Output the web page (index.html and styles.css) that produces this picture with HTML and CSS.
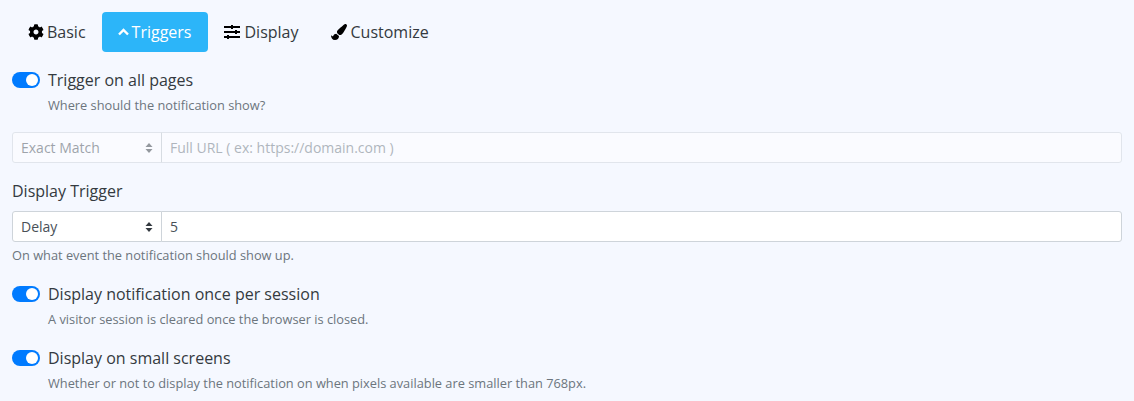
FILE: index.html
```html
<!DOCTYPE html>
<html lang="en">
<head>
    <meta charset="UTF-8">
    <title>Triggers</title>
    <link rel="stylesheet" href="styles.css">
</head>
<body>
    <nav class="tabs">
        <a class="tab" href="#">
            <svg class="tab-icon tab-icon-gear" viewBox="0 0 512 512"><path d="M487.4 315.7l-42.6-24.6c4.3-23.2 4.3-47 0-70.2l42.6-24.6c4.9-2.8 7.1-8.6 5.5-14-11.1-35.6-30-67.8-54.7-94.6-3.8-4.1-10-5.1-14.8-2.3L380.8 110c-17.9-15.4-38.5-27.3-60.8-35.1V25.8c0-5.6-3.9-10.5-9.4-11.7-36.7-8.2-74.3-7.8-109.2 0-5.5 1.2-9.4 6.1-9.4 11.7V75c-22.2 7.9-42.8 19.8-60.8 35.1L88.7 85.5c-4.9-2.8-11-1.9-14.8 2.3-24.7 26.7-43.6 58.9-54.7 94.6-1.7 5.4.6 11.2 5.5 14L67.3 221c-4.3 23.2-4.3 47 0 70.2l-42.6 24.6c-4.9 2.8-7.1 8.6-5.5 14 11.1 35.6 30 67.8 54.7 94.6 3.8 4.1 10 5.1 14.8 2.3l42.6-24.6c17.9 15.4 38.5 27.3 60.8 35.1v49.2c0 5.6 3.9 10.5 9.4 11.7 36.7 8.2 74.3 7.8 109.2 0 5.5-1.2 9.4-6.1 9.4-11.7v-49.2c22.2-7.9 42.8-19.8 60.8-35.1l42.6 24.6c4.9 2.8 11 1.9 14.8-2.3 24.7-26.7 43.6-58.9 54.7-94.6 1.5-5.5-.7-11.3-5.6-14.1zM256 336c-44.1 0-80-35.9-80-80s35.9-80 80-80 80 35.9 80 80-35.9 80-80 80z"/></svg>
            Basic
        </a>
        <a class="tab tab-active" href="#">
            <svg class="tab-chevron" viewBox="0 0 11 8"><path d="M1 6.500 5.500 2 10 6.500" fill="none" stroke="currentColor" stroke-width="2.400"/></svg>
            Triggers
        </a>
        <a class="tab" href="#">
            <svg class="tab-icon tab-icon-wide" viewBox="0 0 16 14"><path d="M0 1h16v2H0zM0 6h16v2H0zM0 11h16v2H0zM7 0h2v4H7zM11 5h2v4h-2zM3 10h2v4H3z"/></svg>
            Display
        </a>
        <a class="tab" href="#">
            <svg class="tab-icon" viewBox="0 0 512 512"><path d="M167.02 309.34c-40.12 2.58-76.53 17.86-97.19 72.3-2.35 6.21-8 9.98-14.59 9.98-11.11 0-45.46-27.67-55.25-34.35C0 439.62 37.93 512 128 512c75.86 0 128-43.77 128-120.19 0-3.11-.65-6.08-.97-9.13l-88.01-73.34zM457.89 0c-15.16 0-29.37 6.71-40.21 16.45C213.27 199.05 192 203.34 192 257.09c0 13.7 3.25 26.76 8.73 38.7l63.82 53.18c7.21 1.8 14.64 3.03 22.39 3.03 62.11 0 98.11-45.47 211.16-256.46 7.38-14.35 13.9-29.85 13.9-45.99C512 20.64 486 0 457.89 0z"/></svg>
            Customize
        </a>
    </nav>

    <div class="switch-row switch-first">
        <span class="switch"><span class="knob"></span></span>
        <div>
            <div class="switch-label">Trigger on all pages</div>
            <small class="help">Where should the notification show?</small>
        </div>
    </div>

    <div class="input-group is-disabled">
        <select class="group-select" disabled>
            <option>Exact Match</option>
        </select>
        <input class="group-input" type="text" placeholder="Full URL ( ex: https://domain.com )" disabled>
    </div>

    <label class="field-label">Display Trigger</label>
    <div class="input-group">
        <select class="group-select">
            <option>Delay</option>
        </select>
        <input class="group-input" type="text" value="5">
    </div>
    <small class="help">On what event the notification should show up.</small>

    <div class="switch-row switch-second">
        <span class="switch"><span class="knob"></span></span>
        <div>
            <div class="switch-label">Display notification once per session</div>
            <small class="help">A visitor session is cleared once the browser is closed.</small>
        </div>
    </div>

    <div class="switch-row switch-third">
        <span class="switch"><span class="knob"></span></span>
        <div>
            <div class="switch-label">Display on small screens</div>
            <small class="help">Whether or not to display the notification on when pixels available are smaller than 768px.</small>
        </div>
    </div>
</body>
</html>
```
FILE: styles.css
```css
* {
    box-sizing: border-box;
}
html, body {
    height: 401px;
    overflow: hidden;
}
body {
    margin: 0;
    padding: 12px;
    background-color: #f5f8ff;
    color: #343a40;
    font-family: "Open Sans", sans-serif;
    font-size: 16px;
    line-height: 24px;
}
.tabs {
    display: flex;
}
.tab {
    display: flex;
    align-items: center;
    height: 40px;
    padding: 0 16px;
    border-radius: 4px;
    color: #343a40;
    text-decoration: none;
}
.tab-active {
    padding-right: 17px;
    background-color: #2cb5f9;
    color: #fff;
}
.tab-icon {
    width: 16px;
    height: 16px;
    margin-right: 4px;
    fill: #000;
}
.tab-icon-gear {
    margin-right: 3px;
}
.tab-icon-wide {
    height: 14px;
}
.tab-chevron {
    width: 11px;
    height: 8px;
    margin-right: 3px;
}
.switch-row {
    display: flex;
    align-items: flex-start;
}
.switch-first {
    margin-top: 16px;
}
.switch-second {
    margin-top: 17px;
}
.switch-third {
    margin-top: 17px;
}
.switch {
    display: flex;
    align-items: center;
    justify-content: flex-end;
    flex-shrink: 0;
    width: 28px;
    height: 16px;
    margin: 4px 8px 0 0;
    padding-right: 2px;
    border-radius: 8px;
    background-color: #007bff;
}
.knob {
    width: 12px;
    height: 12px;
    border-radius: 50%;
    background-color: #fff;
}
.help {
    display: block;
    margin-top: 3px;
    color: #6c757d;
    font-size: 12.800px;
    line-height: 20px;
}
.input-group {
    display: flex;
    height: 31px;
}
.is-disabled {
    margin-top: 17px;
}
.group-select, .group-input {
    height: 31px;
    border: 1px solid #ced4da;
    outline: none;
    color: #495057;
    font-family: "Open Sans", sans-serif;
    font-size: 14px;
}
.group-select {
    flex: 0 0 150px;
    padding: 0 8px;
    border-radius: 3px 0 0 3px;
    appearance: none;
    background: #fff url("data:image/svg+xml,%3Csvg xmlns='http://www.w3.org/2000/svg' viewBox='0 0 8 10'%3E%3Cpath fill='%23343a40' d='M4 0 .5 4h7zM4 10 .5 6h7z'/%3E%3C/svg%3E") no-repeat right 8px center / 8px 10px;
}
.group-input {
    flex: 1;
    margin-left: -1px;
    padding: 0 8px;
    border-radius: 0 3px 3px 0;
    background-color: #fff;
}
.is-disabled .group-select, .is-disabled .group-input {
    opacity: 0.5;
}
.group-input::placeholder {
    color: #6c757d;
    opacity: 1;
}
.field-label {
    display: block;
    margin-top: 16px;
    margin-bottom: 8px;
}
```
